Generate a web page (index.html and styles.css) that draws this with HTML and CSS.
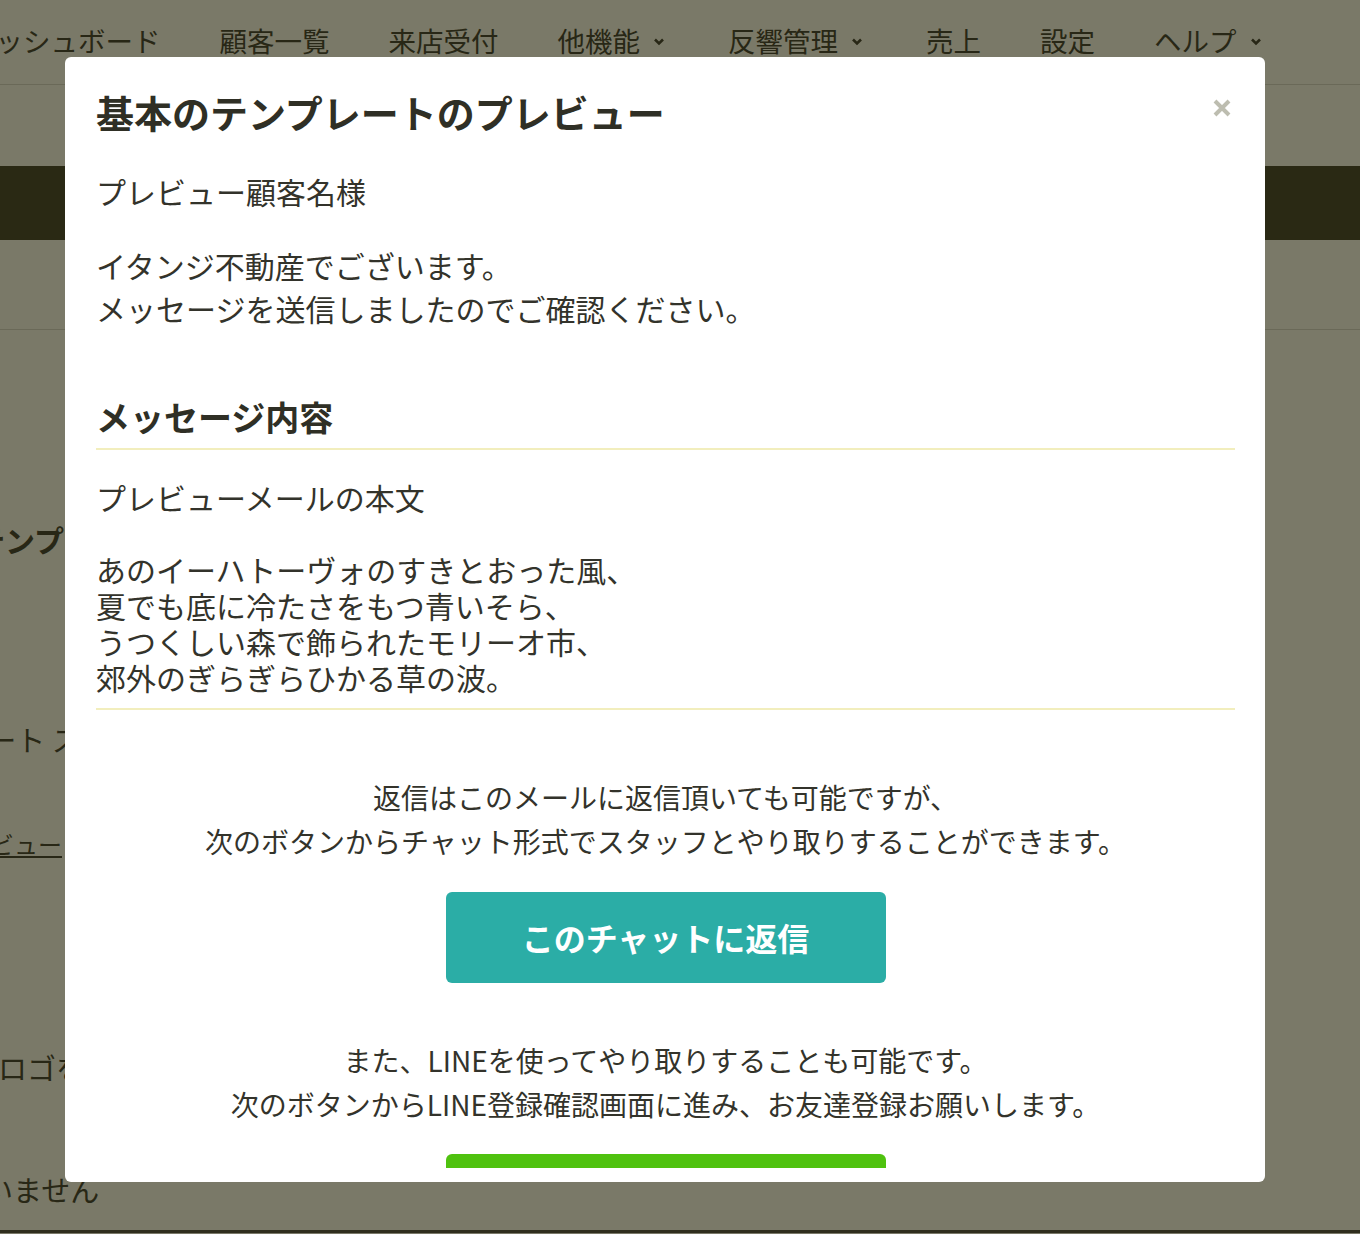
FILE: index.html
```html
<!DOCTYPE html>
<html lang="ja">
<head>
  <meta charset="UTF-8">
  <meta name="viewport" content="width=device-width, initial-scale=1.0">
  <title>基本のテンプレートのプレビュー</title>
  <link rel="stylesheet" href="styles.css">
</head>
<body>
  <!-- page behind the modal -->
  <header class="header">
    <nav class="nav">
      <a class="nav-item">ダッシュボード</a>
      <a class="nav-item">顧客一覧</a>
      <a class="nav-item">来店受付</a>
      <a class="nav-item">他機能<span class="caret"><svg width="12" height="8" viewBox="0 0 12 8"><path d="M2 1.5 L6 5.5 L10 1.5" fill="none" stroke="currentColor" stroke-width="2.6"/></svg></span></a>
      <a class="nav-item">反響管理<span class="caret"><svg width="12" height="8" viewBox="0 0 12 8"><path d="M2 1.5 L6 5.5 L10 1.5" fill="none" stroke="currentColor" stroke-width="2.6"/></svg></span></a>
      <a class="nav-item">売上</a>
      <a class="nav-item">設定</a>
      <a class="nav-item">ヘルプ<span class="caret"><svg width="12" height="8" viewBox="0 0 12 8"><path d="M2 1.5 L6 5.5 L10 1.5" fill="none" stroke="currentColor" stroke-width="2.6"/></svg></span></a>
    </nav>
  </header>
  <div class="subbar"></div>
  <div class="band"></div>
  <div class="toolbar"></div>

  <main class="content">
    <h2 class="page-title">テンプレート編集</h2>
    <div class="row row-name">テンプレート スタイル</div>
    <div class="row row-link"><a href="#">プレビュー</a></div>
    <div class="row row-logo">ロゴを設定してください</div>
    <div class="row row-none">いません</div>
  </main>
  <footer class="footer"></footer>

  <div class="overlay"></div>

  <!-- modal -->
  <div class="modal">
    <h1 class="modal-title">基本のテンプレートのプレビュー</h1>
    <button class="close" aria-label="閉じる">
      <svg width="18" height="18" viewBox="0 0 18 18"><path d="M2 2 L16 16 M16 2 L2 16" stroke="currentColor" stroke-width="4"/></svg>
    </button>

    <div class="modal-body">
      <p class="greeting">プレビュー顧客名様</p>
      <p class="intro">イタンジ不動産でございます。<br>メッセージを送信しましたのでご確認ください。</p>

      <h3 class="section-title">メッセージ内容</h3>
      <div class="message">プレビューメールの本文

あのイーハトーヴォのすきとおった風、
夏でも底に冷たさをもつ青いそら、
うつくしい森で飾られたモリーオ市、
郊外のぎらぎらひかる草の波。</div>

      <p class="info">返信はこのメールに返信頂いても可能ですが、<br>次のボタンからチャット形式でスタッフとやり取りすることができます。</p>
      <a class="btn btn-chat" href="#">このチャットに返信</a>

      <p class="info info-line">また、LINEを使ってやり取りすることも可能です。<br>次のボタンからLINE登録確認画面に進み、お友達登録お願いします。</p>
      <a class="btn btn-line" href="#">LINEで友だち追加</a>
    </div>
  </div>
</body>
</html>
```

FILE: styles.css
```css
body {
  margin: 0;
  background: #fff;
  color: #333;
  font-family: "Noto Sans CJK JP", "Noto Sans", sans-serif;
  overflow: hidden;
  height: 1234px;
}

/* page behind */
.header {
  height: 84px;
  border-bottom: 1px solid #d8d8d8;
}
.nav {
  display: flex;
  align-items: center;
  gap: 59px;
  height: 80px;
  margin-left: -32px;
  white-space: nowrap;
}
.nav-item {
  font-size: 27.5px;
  color: #333;
  display: flex;
  align-items: center;
}
.caret {
  display: inline-flex;
  margin: 4px 4px 0 13px;
}
.subbar {
  height: 81px;
}
.band {
  height: 74px;
  background: #39392d;
}
.toolbar {
  height: 89px;
  border-bottom: 1px solid #d8d8d8;
}
.content {
  white-space: nowrap;
}
.page-title {
  font-size: 30px;
  line-height: 40px;
  margin: 189px 0 0 -25px;
}
.row {
  font-size: 29px;
  line-height: 40px;
}
.row-name {
  margin: 160px 0 0 -128px;
}
.row-link {
  font-size: 24px;
  line-height: 34px;
  margin: 68px 0 0 -58px;
}
.row-link a {
  color: #333;
}
.row-logo {
  margin: 186px 0 0 -2px;
}
.row-none {
  margin: 82px 0 0 -16px;
}
.footer {
  margin-top: 21px;
  border-top: 3px solid #444;
}

.overlay {
  position: fixed;
  inset: 0;
  background: rgba(33, 32, 3, 0.6);
}

/* modal */
.modal {
  position: fixed;
  top: 57px;
  left: 65px;
  width: 1200px;
  height: 1125px;
  box-sizing: border-box;
  padding: 0 30px 14px 31px;
  background: #fff;
  border-radius: 6px;
  display: flex;
  flex-direction: column;
  color: #33332b;
}
.modal-title {
  margin: 0;
  padding-top: 33px;
  font-size: 38px;
  line-height: 44px;
  font-weight: 700;
  color: #2f2f25;
}
.close {
  position: absolute;
  top: 42px;
  right: 34px;
  padding: 0;
  border: none;
  background: none;
  color: #bdbdb0;
  line-height: 0;
  cursor: pointer;
}
.modal-body {
  flex: 1;
  overflow: hidden;
  font-size: 30px;
  line-height: 43px;
}
.greeting {
  margin: 36px 0 0;
}
.intro {
  margin: 31px 0 0;
}
.section-title {
  margin: 65px 0 0;
  padding-bottom: 10px;
  border-bottom: 2px solid #f2eebd;
  font-size: 34px;
  line-height: 43px;
  font-weight: 700;
  color: #2f2f25;
}
.message {
  margin-top: 29px;
  padding-bottom: 13px;
  border-bottom: 2px solid #f2eebd;
  white-space: pre-line;
  line-height: 36px;
}
.info {
  margin: 65px 0 0;
  text-align: center;
  font-size: 28px;
  line-height: 44px;
}
.info-line {
  margin-top: 55px;
}
.btn {
  display: flex;
  align-items: center;
  justify-content: center;
  width: 440px;
  height: 91px;
  margin: 29px auto 0;
  border-radius: 6px;
  color: #fff;
  font-size: 32px;
  font-weight: 700;
  text-decoration: none;
}
.btn-chat {
  background: #2badA6;
}
.btn-line {
  margin-top: 28px;
  background: #4fc20f;
}
```
